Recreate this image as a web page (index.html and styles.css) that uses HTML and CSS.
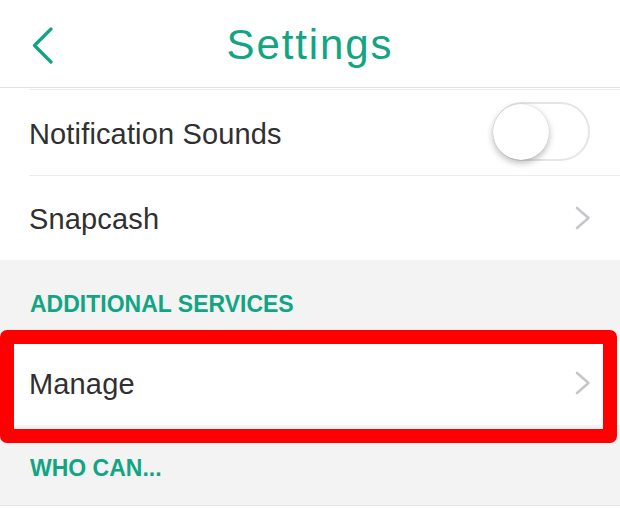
FILE: index.html
```html
<!DOCTYPE html>
<html>
<head>
<meta charset="utf-8">
<link rel="stylesheet" href="styles.css">
</head>
<body>
  <header class="topbar">
    <div class="back">
      <svg width="22" height="37" viewBox="0 0 22 37"><polyline points="19,2 2.5,18.5 19,35" fill="none" stroke="#12a583" stroke-width="3.2" stroke-linecap="round" stroke-linejoin="round"/></svg>
    </div>
    <h1 class="title">Settings</h1>
    <div></div>
  </header>
  <div class="list">
    <div class="stub"><div class="line"></div></div>
    <div class="row">
      <div class="row-inner bordered">
        <span class="label">Notification Sounds</span>
        <div class="toggle"><div class="knob"></div></div>
      </div>
    </div>
    <div class="row short">
      <div class="row-inner">
        <span class="label">Snapcash</span>
        <svg class="chev" width="17" height="24" viewBox="0 0 17 24"><polyline points="3,2 14.5,12 3,22" fill="none" stroke="#c7c7cb" stroke-width="2.6" stroke-linecap="round" stroke-linejoin="round"/></svg>
      </div>
    </div>
  </div>
  <div class="section">ADDITIONAL SERVICES</div>
  <div class="highlight-wrap">
    <div class="row manage">
      <div class="row-inner">
        <span class="label">Manage</span>
        <svg class="chev" width="17" height="24" viewBox="0 0 17 24"><polyline points="3,2 14.5,12 3,22" fill="none" stroke="#c7c7cb" stroke-width="2.6" stroke-linecap="round" stroke-linejoin="round"/></svg>
      </div>
    </div>
    <div class="redbox"></div>
  </div>
  <div class="section last">WHO CAN...</div>
</body>
</html>
```
FILE: styles.css
```css
* { box-sizing: border-box; }
html, body {
  margin: 0;
  padding: 0;
  background: #ffffff;
  font-family: "Liberation Sans", Arial, sans-serif;
  width: 620px;
  overflow: hidden;
}
.topbar {
  height: 88px;
  padding-top: 3px;
  display: grid;
  grid-template-columns: 1fr auto 1fr;
  align-items: center;
  background: #fff;
  border-bottom: 1px solid #e2e2e2;
}
.back {
  padding-left: 32px;
  display: flex;
  align-items: center;
}
.back svg { display: block; }
.title {
  margin: 0;
  font-size: 42px;
  font-weight: normal;
  letter-spacing: 1.9px;
  line-height: 46px;
  color: #12a583;
}
.list { background: #fff; }
.stub {
  height: 2px;
  padding-left: 29px;
  padding-top: 1px;
}
.stub .line {
  height: 1px;
  background: #ececec;
}
.row {
  background: #fff;
  padding-left: 29px;
}
.row-inner {
  height: 86px;
  display: flex;
  align-items: center;
  justify-content: space-between;
  padding-right: 29px;
}
.row.short .row-inner { height: 84px; }
.row-inner.bordered { border-bottom: 1px solid #ececec; }
.label {
  font-size: 29px;
  letter-spacing: 0.15px;
  color: #303030;
  padding-top: 3px;
}
.chev { display: block; }
.toggle {
  position: relative;
  width: 97px;
  height: 59px;
  border: 2px solid #e5e5e5;
  border-radius: 30px;
  background: #fff;
  margin-right: 1px;
  margin-top: -2px;
}
.knob {
  position: absolute;
  left: -2px;
  top: 0px;
  width: 56px;
  height: 56px;
  border-radius: 50%;
  background: #fff;
  box-shadow: 0 3px 7px rgba(0,0,0,0.28), 0 0 1px rgba(0,0,0,0.2);
}
.section {
  background: #f3f3f3;
  color: #12a583;
  font-weight: bold;
  font-size: 23px;
  line-height: 26px;
  padding: 31px 30px 24px;
}
.section.last {
  padding: 30px 30px 24px;
  border-bottom: 1px solid #e6e6e6;
}
.highlight-wrap {
  position: relative;
  background: #f3f3f3;
}
.row.manage .row-inner { height: 84px; }
.redbox {
  position: absolute;
  left: 0;
  right: 3px;
  top: -11px;
  bottom: -18px;
  border: 14px solid #fe0000;
  border-radius: 7px;
}
```
